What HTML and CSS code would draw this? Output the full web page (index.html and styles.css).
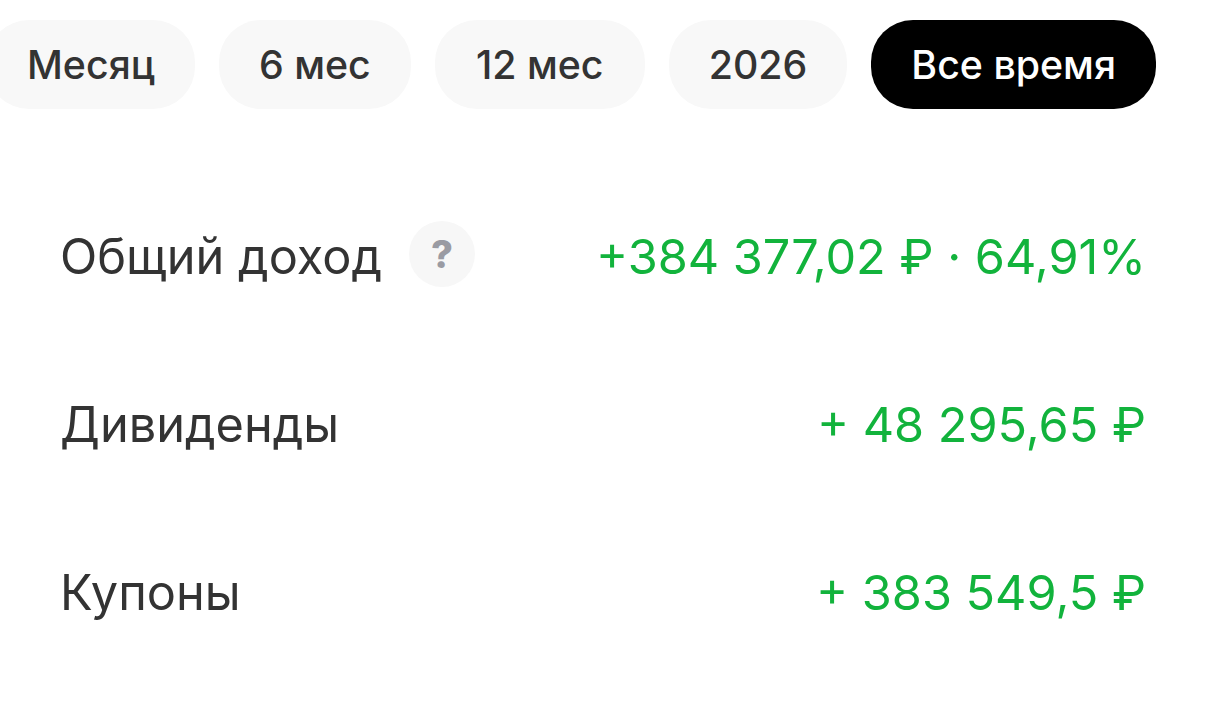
FILE: index.html
```html
<!DOCTYPE html>
<html lang="ru">
<head>
  <meta charset="UTF-8">
  <title>Доход</title>
  <link rel="stylesheet" href="styles.css">
</head>
<body>
  <nav class="periods">
    <a class="pill">Месяц</a>
    <a class="pill">6 мес</a>
    <a class="pill pill-wide">12 мес</a>
    <a class="pill">2026</a>
    <a class="pill active">Все время</a>
  </nav>

  <main class="rows">
    <div class="row">
      <div class="label">
        <span>Общий доход</span>
        <span class="hint">?</span>
      </div>
      <div class="value">+384 377,02 ₽ · 64,91%</div>
    </div>
    <div class="row">
      <div class="label">Дивиденды</div>
      <div class="value">+ 48 295,65 ₽</div>
    </div>
    <div class="row">
      <div class="label">Купоны</div>
      <div class="value">+ 383 549,5 ₽</div>
    </div>
  </main>
</body>
</html>
```

FILE: styles.css
```css
* {
  box-sizing: border-box;
}
html, body {
  height: 100%;
}
body {
  margin: 0;
  background-color: #fff;
  font-family: Inter, "Noto Sans", sans-serif;
  overflow: hidden;
}
.periods {
  display: flex;
  gap: 24px;
  padding-top: 20px;
  margin-left: -13px;
}
.pill {
  display: flex;
  justify-content: center;
  align-items: center;
  height: 89px;
  padding: 0 40px;
  border-radius: 42px;
  background-color: #f8f8f8;
  color: #333;
  font-size: 39.3px;
  font-weight: 500;
  white-space: nowrap;
}
.pill-wide {
  min-width: 210px;
}
.pill.active {
  background-color: #000;
  color: #fff;
}
.rows {
  margin-top: 63px;
  padding: 0 60px;
}
.row {
  display: flex;
  justify-content: space-between;
  align-items: center;
  height: 168px;
}
.label {
  display: flex;
  align-items: center;
  gap: 27px;
  color: #333;
  font-size: 48.7px;
}
.hint {
  display: flex;
  justify-content: center;
  align-items: center;
  width: 66px;
  height: 66px;
  margin-top: -4px;
  border-radius: 50%;
  background-color: #f7f7f7;
  color: #9a9ba3;
  font-size: 38px;
  font-weight: 800;
}
.value {
  color: #12b33c;
  font-size: 48.6px;
  white-space: nowrap;
}
```
